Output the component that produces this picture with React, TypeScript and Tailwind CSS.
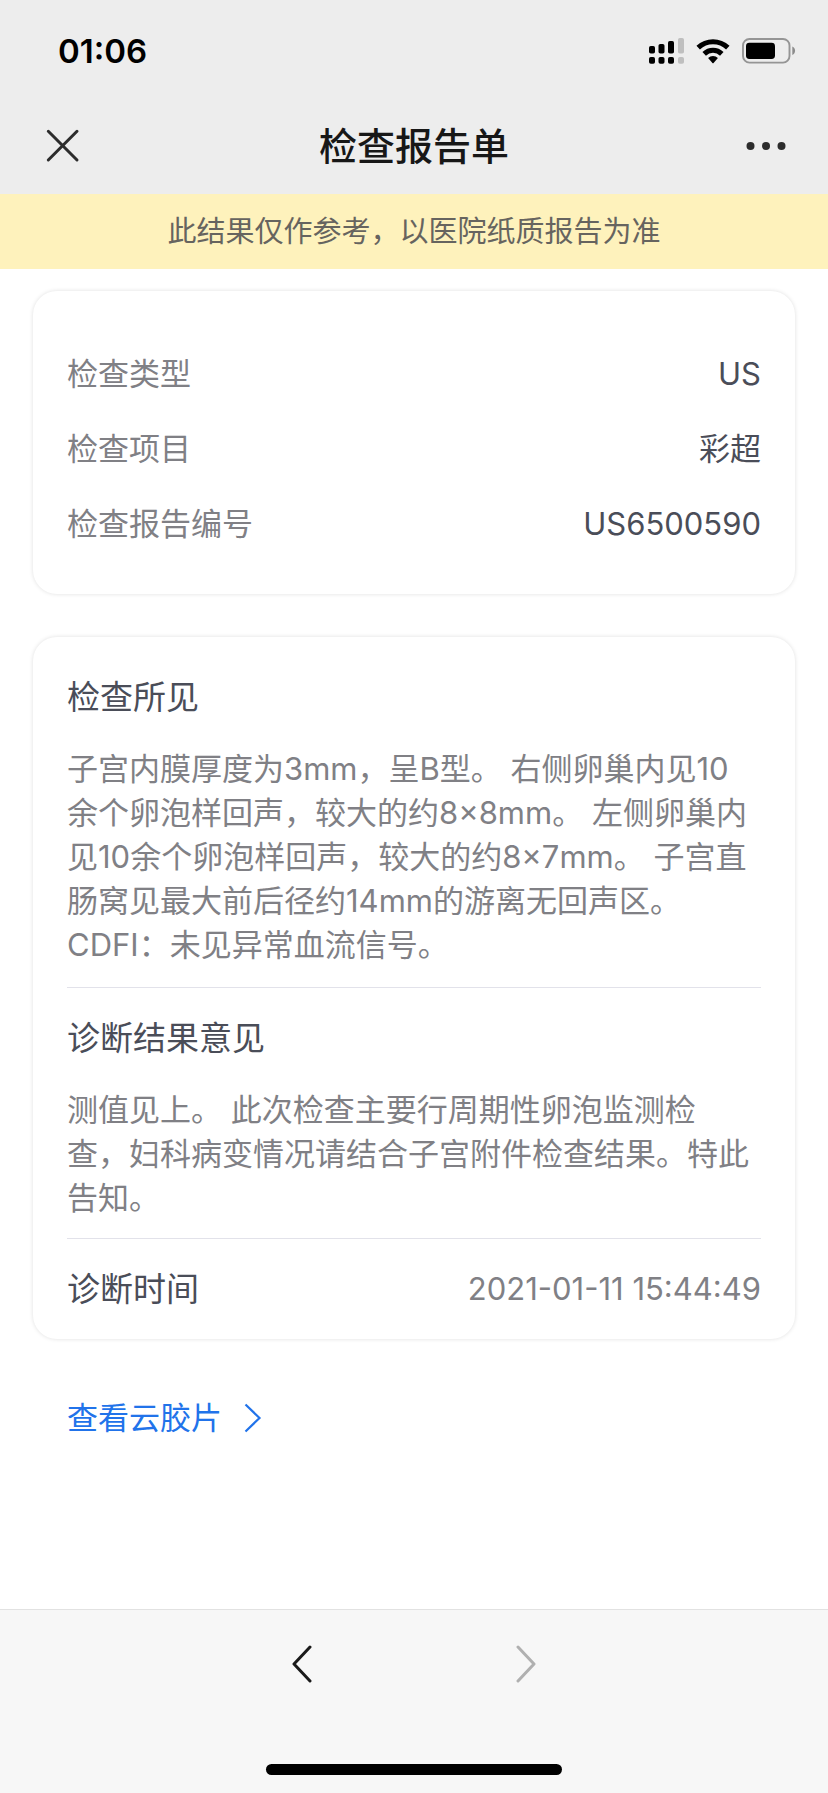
const info = [
  { label: "检查类型", value: "US" },
  { label: "检查项目", value: "彩超" },
  { label: "检查报告编号", value: "US6500590" },
];

const findings = `子宫内膜厚度为3mm，呈B型。 右侧卵巢内见10
余个卵泡样回声，较大的约8×8mm。 左侧卵巢内
见10余个卵泡样回声，较大的约8×7mm。 子宫直
肠窝见最大前后径约14mm的游离无回声区。
CDFI：未见异常血流信号。`;

const opinion = `测值见上。 此次检查主要行周期性卵泡监测检
查，妇科病变情况请结合子宫附件检查结果。特此
告知。`;

function SignalIcon() {
  return (
    <svg width="36" height="28" viewBox="0 0 36 28" aria-hidden="true">
      <g fill="#000">
        <rect x="1" y="9" width="6" height="7.5" rx="1.8" />
        <rect x="10.5" y="7" width="6" height="9.5" rx="1.8" />
        <rect x="20" y="4" width="6" height="12.5" rx="1.8" />
        <rect x="1" y="20" width="6" height="6.8" rx="1.8" />
        <rect x="10.5" y="20" width="6" height="6.8" rx="1.8" />
        <rect x="20" y="20" width="6" height="6.8" rx="1.8" />
      </g>
      <g fill="#bfbfbf">
        <rect x="30" y="1" width="6" height="15.5" rx="1.8" />
        <rect x="30" y="20" width="6" height="6.8" rx="1.8" />
      </g>
    </svg>
  );
}

function WifiIcon() {
  return (
    <svg width="34" height="26" viewBox="0 0 34 26" aria-hidden="true">
      <g fill="none" stroke="#000" strokeWidth="5">
        <path d="M2.2 9.6 A21.5 21.5 0 0 1 31.8 9.6" />
        <path d="M8.2 15.9 A12.6 12.6 0 0 1 25.8 15.9" />
      </g>
      <path d="M12.1 20 A7.2 7.2 0 0 1 21.9 20 L17.6 24.9 Q17 25.5 16.4 24.9 Z" fill="#000" />
    </svg>
  );
}

function BatteryIcon() {
  return (
    <svg width="54" height="26" viewBox="0 0 54 26" aria-hidden="true">
      <rect x="1" y="1" width="46.5" height="23.6" rx="6.5" fill="none" stroke="#959595" strokeWidth="1.9" />
      <rect x="4" y="4.8" width="29" height="16.2" rx="3.4" fill="#000" />
      <path d="M50.3 8.6 C54 10.2 54 15.4 50.3 17 Z" fill="#8c8c8c" />
    </svg>
  );
}

export default function App() {
  return (
    <div className="min-h-screen flex flex-col bg-white font-['Inter','Noto_Sans_CJK_SC',sans-serif]">
      <header className="bg-[#ededed]">
        {/* 状态栏 */}
        <div className="h-24 pt-1.5 pl-[58px] pr-8 flex items-center justify-between">
          <span className="text-[33px] leading-10 font-semibold text-black">01:06</span>
          <div className="flex items-center gap-3">
            <SignalIcon />
            <WifiIcon />
            <BatteryIcon />
          </div>
        </div>

        {/* 导航栏 */}
        <div className="h-[98px] pt-0.5 px-10 grid grid-cols-[1fr_auto_1fr] items-center">
          <button type="button" aria-label="关闭" className="justify-self-start p-1">
            <svg width="36" height="36" viewBox="0 0 36 36" fill="none" stroke="#2c2c2c" strokeWidth="3" strokeLinecap="round" aria-hidden="true">
              <path d="M4.3 3.3 L33 32 M33 3.3 L4.3 32" />
            </svg>
          </button>
          <h1 className="text-[38px] leading-[48px] font-medium text-[#171717]">检查报告单</h1>
          <button type="button" aria-label="更多" className="justify-self-end">
            <svg width="42" height="12" viewBox="0 0 42 12" fill="#2c2c2c" aria-hidden="true">
              <circle cx="4.5" cy="6" r="4" />
              <circle cx="20" cy="6" r="4" />
              <circle cx="35.5" cy="6" r="4" />
            </svg>
          </button>
        </div>
      </header>

      <p className="h-[75px] flex items-center justify-center bg-[#fef2bc] text-[29px] leading-10 text-[#66645f]">
        此结果仅作参考，以医院纸质报告为准
      </p>

      <main className="flex-1 px-[33px] pt-[22px]">
        <dl className="px-[34px] pt-[45px] pb-[33px] rounded-[24px] shadow-[0_0_4px_rgba(0,0,0,0.13)]">
          {info.map((row) => (
            <div key={row.label} className="h-[75px] flex items-center justify-between text-[31px] leading-[44px]">
              <dt className="text-[#808085]">{row.label}</dt>
              <dd className="text-[#4a4d58]">{row.value}</dd>
            </div>
          ))}
        </dl>

        <div className="mt-[43px] px-[34px] rounded-[24px] shadow-[0_0_4px_rgba(0,0,0,0.13)]">
          <section className="pt-9 pb-5 border-b border-[#e2e2ea]">
            <h2 className="text-[33px] leading-[48px] text-[#4a4d58]">检查所见</h2>
            <p className="mt-[26px] text-[31px] leading-[44px] text-[#808085] whitespace-pre-line">{findings}</p>
          </section>
          <section className="pt-[26px] pb-[18px] border-b border-[#e2e2ea]">
            <h2 className="text-[33px] leading-[48px] text-[#4a4d58]">诊断结果意见</h2>
            <p className="mt-[26px] text-[31px] leading-[44px] text-[#808085] whitespace-pre-line">{opinion}</p>
          </section>
          <section className="py-[26px] flex items-center justify-between">
            <h2 className="text-[33px] leading-[48px] text-[#4a4d58]">诊断时间</h2>
            <time dateTime="2021-01-11T15:44:49" className="text-[31px] leading-[44px] text-[#808085]">2021-01-11 15:44:49</time>
          </section>
        </div>

        <a href="#film" className="mt-[57px] ml-[34px] inline-flex items-center gap-[22px] text-[31px] leading-[44px] text-[#2173ea]">
          查看云胶片
          <svg width="18" height="30" viewBox="0 0 18 30" fill="none" stroke="currentColor" strokeWidth="2.2" aria-hidden="true">
            <path d="M1.5 1.5 L15.5 15 L1.5 28.5" />
          </svg>
        </a>
      </main>

      <footer className="bg-[#f7f7f7] border-t border-[#e2e2e2]">
        <nav className="pt-[35px] flex justify-center gap-[204px]">
          <button type="button" aria-label="后退">
            <svg width="20" height="38" viewBox="0 0 20 38" fill="none" stroke="#1a1a1a" strokeWidth="3" strokeLinecap="round" strokeLinejoin="round" aria-hidden="true">
              <path d="M18 2 L2 19 L18 36" />
            </svg>
          </button>
          <button type="button" aria-label="前进" disabled>
            <svg width="20" height="38" viewBox="0 0 20 38" fill="none" stroke="#b0b0b0" strokeWidth="3" strokeLinecap="round" strokeLinejoin="round" aria-hidden="true">
              <path d="M2 2 L18 19 L2 36" />
            </svg>
          </button>
        </nav>
        <div className="mt-[81px] mb-[18px] mx-auto w-[296px] h-[11px] rounded-full bg-black" />
      </footer>
    </div>
  );
}
